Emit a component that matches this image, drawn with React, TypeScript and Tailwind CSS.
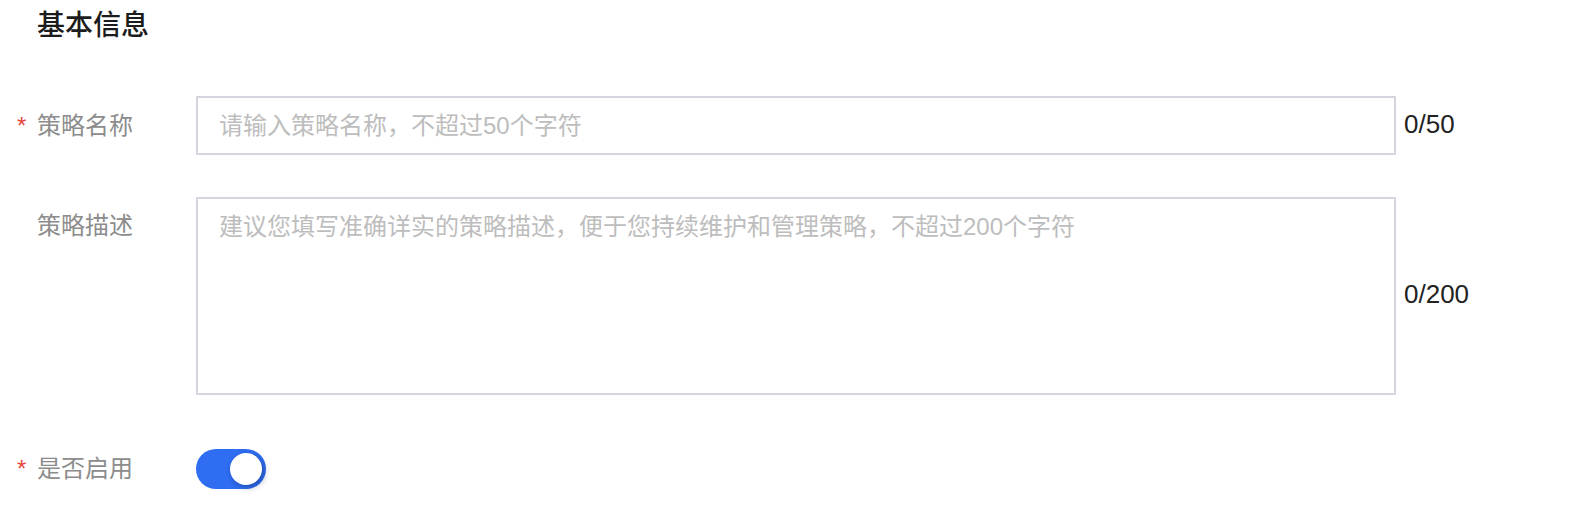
const font = { fontFamily: '"Liberation Sans", "Noto Sans CJK SC", sans-serif' };

function Label({ text, required }: { text: string; required?: boolean }) {
  return (
    <div className="flex w-[196px] shrink-0 items-center pl-[17px] text-[24px] leading-[34px] text-[#8c8c8c]">
      <span className="w-[20px] text-[#e5473d]">{required ? "*" : ""}</span>
      <span>{text}</span>
    </div>
  );
}

export default function App() {
  return (
    <div className="min-h-screen bg-white" style={font}>
      <h2 className="pl-[37px] text-[28px] font-medium leading-[52px] text-[#1c1c1c]">基本信息</h2>

      <div className="mt-[44px] flex items-center">
        <Label text="策略名称" required />
        <input
          className="h-[59px] w-[1200px] border-2 border-[#d3d6df] px-[21px] text-[24px] text-[#333] outline-none placeholder:text-[#bdbdbd]"
          placeholder="请输入策略名称，不超过50个字符"
        />
        <span className="mb-[3px] ml-[8px] text-[26px] text-[#222]">0/50</span>
      </div>

      <div className="mt-[42px] flex items-center">
        <div className="self-start pt-[12px]">
          <Label text="策略描述" />
        </div>
        <textarea
          className="h-[198px] w-[1200px] resize-none border-2 border-[#d3d6df] px-[21px] py-[11px] text-[24px] leading-[34px] text-[#333] outline-none placeholder:text-[#bdbdbd]"
          placeholder="建议您填写准确详实的策略描述，便于您持续维护和管理策略，不超过200个字符"
        />
        <span className="mb-[4px] ml-[8px] text-[26px] text-[#222]">0/200</span>
      </div>

      <div className="mt-[54px] flex items-center">
        <Label text="是否启用" required />
        <button className="flex h-[40px] w-[70px] items-center justify-end rounded-full bg-[#2f6ef2] pr-[4px]">
          <span className="h-[32px] w-[32px] rounded-full bg-white shadow-[2px_2px_6px_rgba(10,30,90,0.45)]" />
        </button>
      </div>
    </div>
  );
}
